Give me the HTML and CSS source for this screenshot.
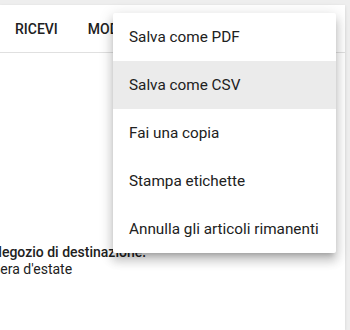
FILE: index.html
```html
<!DOCTYPE html>
<html lang="it">
<head>
    <meta charset="UTF-8">
    <title>Ordine</title>
    <link rel="stylesheet" href="styles.css">
</head>
<body>
    <div class="card">
        <div class="tabs">
            <div class="tab">Ricevi</div>
            <div class="tab">Modifica</div>
            <div class="tab">Altro</div>
        </div>
        <div class="details">
            <p class="label">Negozio di destinazione:</p>
            <p class="value">Sera d'estate</p>
        </div>
    </div>
    <ul class="menu">
        <li>Salva come PDF</li>
        <li class="active">Salva come CSV</li>
        <li>Fai una copia</li>
        <li>Stampa etichette</li>
        <li>Annulla gli articoli rimanenti</li>
    </ul>
</body>
</html>
```

FILE: styles.css
```css
* {
    margin: 0;
    padding: 0;
    box-sizing: border-box;
}

html {
    height: 100%;
}

body {
    height: 100%;
    overflow: hidden;
    padding-top: 5px;
    background-color: #eeeeee;
    font-family: Roboto, "Liberation Sans", sans-serif;
    color: #212121;
}

.card {
    width: 345px;
    height: 100%;
    background-color: #fff;
    box-shadow: 0 1px 3px rgba(0, 0, 0, 0.12);
}

.tabs {
    display: flex;
    height: 48px;
    border-bottom: 1px solid #e0e0e0;
    white-space: nowrap;
    overflow: hidden;
}

.tab {
    display: flex;
    align-items: center;
    padding: 0 15px;
    font-size: 14px;
    font-weight: 500;
    text-transform: uppercase;
    color: #212121;
}

.details {
    padding-top: 191px;
    margin-left: -8px;
    font-size: 14px;
    line-height: 17px;
}

.label {
    font-weight: 500;
}

.menu {
    list-style: none;
    position: absolute;
    left: 113px;
    top: 13px;
    width: 223px;
    background-color: #fff;
    box-shadow: 0 5px 5px -3px rgba(0, 0, 0, 0.2), 0 8px 10px 1px rgba(0, 0, 0, 0.14), 0 3px 14px 2px rgba(0, 0, 0, 0.12);
    border-radius: 2px;
}

.menu li {
    height: 48px;
    line-height: 48px;
    padding: 0 16px;
    font-size: 15.3px;
    white-space: nowrap;
}

.menu li.active {
    background-color: #ebebeb;
}
```
